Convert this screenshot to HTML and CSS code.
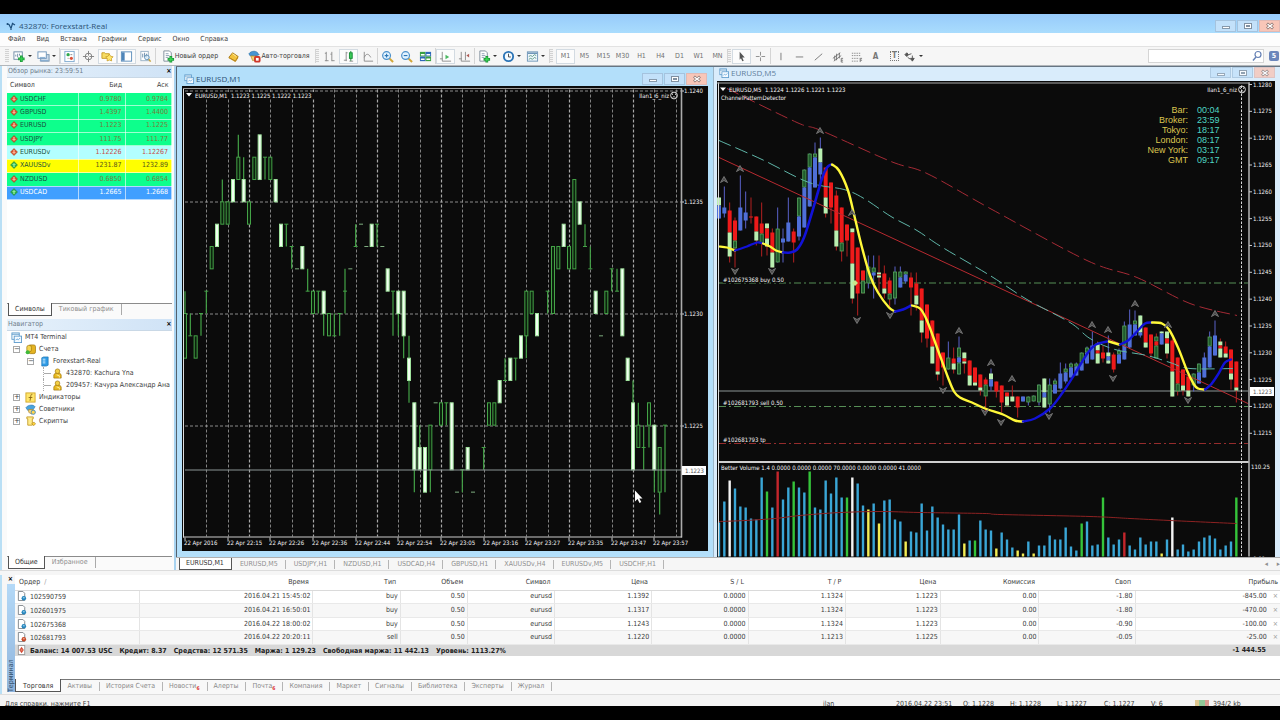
FILE: index.html
```html
<!DOCTYPE html>
<html lang="ru">
<head>
<meta charset="utf-8">
<title>432870: Forexstart-Real</title>
<link rel="stylesheet" href="styles.css">
</head>
<body>
<svg class="defs" aria-hidden="true">
  <symbol id="i-win" viewBox="0 0 12 12"><rect x="1" y="1" width="8" height="7" fill="#fff" stroke="#5f9ccc"/><path d="M1 2.5h8" stroke="#5f9ccc"/><rect x="3.5" y="4.5" width="8" height="7" fill="#f4faff" stroke="#5f9ccc"/><path d="M5 9l1.500-1.500 1.500 1 2-2" fill="none" stroke="#6aa9dc"/></symbol>
  <symbol id="i-newchart" viewBox="0 0 14 14"><rect x="1" y="2" width="9" height="8" fill="#fff" stroke="#6d8aa5"/><path d="M3 7V5M5 8V4M7 6V4" stroke="#6d8aa5"/><path d="M9 6v7M5.500 9.500h7" stroke="#1f9a3c" stroke-width="3"/><path d="M9 7v5M6.500 9.500h5" stroke="#35d34f" stroke-width="1.200"/></symbol>
  <symbol id="i-profiles" viewBox="0 0 14 14"><rect x="4" y="5" width="9" height="7" fill="#c9daea" stroke="#7391ad"/><rect x="1" y="2" width="9" height="7" fill="#fff" stroke="#6f96bb"/><path d="M3 8h6M3 11.500h9" stroke="#7da9d0"/></symbol>
  <symbol id="i-market" viewBox="0 0 14 14"><rect x="2" y="1.500" width="10" height="11" fill="#fff" stroke="#7da9cf"/><circle cx="5.500" cy="5" r="1.800" fill="#2ea84c"/><circle cx="9" cy="9" r="1.700" fill="#dc5238"/><path d="M5 9h1M8 5h2" stroke="#888"/></symbol>
  <symbol id="i-target" viewBox="0 0 14 14"><circle cx="7" cy="7" r="3.600" fill="none" stroke="#808080"/><path d="M7 1v5M7 8v5M1 7h5M8 7h5" stroke="#808080"/></symbol>
  <symbol id="i-folders" viewBox="0 0 14 14"><path d="M1 3h3l1 1h4v5H1z" fill="#f7dd63" stroke="#c79a25"/><path d="M9 4.500l1.400 2.200 2.600.6-1.700 1.900.1 2.600L9 10.800l-2.400 1 .1-2.600L5 7.300l2.600-.6z" fill="#ffe66a" stroke="#c79a25" stroke-width=".8"/></symbol>
  <symbol id="i-panel" viewBox="0 0 14 14"><rect x="1.500" y="2" width="11" height="10" fill="#fff" stroke="#5b8dbb"/><rect x="2" y="2.500" width="3" height="9" fill="#4f86ba"/></symbol>
  <symbol id="i-tester" viewBox="0 0 14 14"><rect x="2" y="1.500" width="8" height="10" fill="#fff" stroke="#9ab2c6"/><path d="M4 4v4M6 3v5M8 4v4" stroke="#6b8daa"/><circle cx="8.500" cy="8" r="2.500" fill="#dbeefa" fill-opacity=".7" stroke="#5f90b8"/><path d="M10.500 10l2 2.500" stroke="#c6a33f" stroke-width="1.600"/></symbol>
  <symbol id="i-order" viewBox="0 0 14 14"><path d="M2 1h6l2 2v9H2z" fill="#fff" stroke="#7e8c99"/><path d="M4 4h3M4 6h4M4 8h3" stroke="#8ca0b2"/><path d="M9.500 6.500v7M6 10h7" stroke="#1c9a38" stroke-width="3"/><path d="M9.500 7.500v5M7 10h5" stroke="#3fdc58" stroke-width="1.200"/></symbol>
  <symbol id="i-editor" viewBox="0 0 14 14"><path d="M2 8l4-5 6 4-3 5z" fill="#f2c23c" stroke="#a87713"/><path d="M2 8l7 4 3-5v2l-3 4-7-4z" fill="#c88f18"/><path d="M6 4l4 3" stroke="#fff0a8"/></symbol>
  <symbol id="i-auto" viewBox="0 0 14 14"><path d="M1 4c3-4 9-3 10 0l1 1-5 2-5-1z" fill="#4595d3" stroke="#2c6fa5" stroke-width=".7"/><path d="M3 6.500h6l-1 4-3 1z" fill="#f4d073" stroke="#b18521" stroke-width=".7"/><rect x="6.500" y="6.500" width="7" height="7" rx="2" fill="#cf3628"/><rect x="8.500" y="8.500" width="3" height="3" fill="#fff"/></symbol>
  <symbol id="i-bars" viewBox="0 0 14 14"><path d="M3.500 2v10M2 11.500h4M2 3.500h1.500M9.500 2v10M8 4.500h1.500M9.500 11.500h3" fill="none" stroke="#8b8b8b"/></symbol>
  <symbol id="i-candle" viewBox="0 0 14 14"><path d="M4.500 2v10M2 11h3M4.500 3H6" fill="none" stroke="#8b8b8b"/><path d="M9.500 1v11" stroke="#168b35"/><rect x="8" y="3" width="3" height="6" fill="#3bcb58" stroke="#168b35"/><path d="M8 12h4" stroke="#8b8b8b"/></symbol>
  <symbol id="i-linec" viewBox="0 0 14 14"><path d="M3.500 2v10H13M3.500 8c2-5 5-4 7 0" fill="none" stroke="#8b8b8b"/></symbol>
  <symbol id="i-zin" viewBox="0 0 14 14"><path d="M9 9l4 4" stroke="#d2a638" stroke-width="2.200"/><circle cx="6" cy="6" r="4.200" fill="#e2f3ff" stroke="#4a8fc9" stroke-width="1.300"/><path d="M4 6h4M6 4v4" stroke="#2d77b7" stroke-width="1.200"/></symbol>
  <symbol id="i-zout" viewBox="0 0 14 14"><path d="M9 9l4 4" stroke="#d2a638" stroke-width="2.200"/><circle cx="6" cy="6" r="4.200" fill="#e2f3ff" stroke="#4a8fc9" stroke-width="1.300"/><path d="M4 6h4" stroke="#2d77b7" stroke-width="1.200"/></symbol>
  <symbol id="i-tile" viewBox="0 0 14 14"><rect x="1" y="2" width="6" height="5" fill="#3aa041"/><rect x="7" y="2" width="6" height="5" fill="#2e68b8"/><rect x="1" y="7" width="6" height="5" fill="#2e68b8"/><rect x="7" y="7" width="6" height="5" fill="#3aa041"/><path d="M2 5h4M8 5h4M2 10h4M8 10h4" stroke="#fff" stroke-width="1.600"/></symbol>
  <symbol id="i-scroll" viewBox="0 0 14 14"><path d="M3.500 2v10H13M1 9.500h3" fill="none" stroke="#8b8b8b"/><path d="M7 5l4 2.500L7 10z" fill="#4cb862"/></symbol>
  <symbol id="i-shift" viewBox="0 0 14 14"><path d="M3.500 2v10H13M1 9.500h3M8 2v9" fill="none" stroke="#8b8b8b"/><path d="M12 4L9 6l3 2z" fill="#b05b54"/></symbol>
  <symbol id="i-clock" viewBox="0 0 14 14"><circle cx="7" cy="7" r="5" fill="#f5fbff" stroke="#2c74b6" stroke-width="2"/><path d="M7 4v3.500h2.500" fill="none" stroke="#444"/></symbol>
  <symbol id="i-tmpl" viewBox="0 0 14 14"><rect x="1.500" y="2" width="11" height="10" fill="#eef6fc" stroke="#6f96b8"/><path d="M2 3.500h10" stroke="#6f96b8" stroke-width="1.600"/><path d="M3 7l2-1 2 1 2-2 2 1M3 10l2-1 2 1 2-2 2 1" fill="none" stroke="#5f9c86"/></symbol>
  <symbol id="i-cursor" viewBox="0 0 14 14"><path d="M5 2l5.500 6-2.700.2 1.600 3.300-1.500.7-1.500-3.400L5 10.500z" fill="#555"/></symbol>
  <symbol id="i-cross" viewBox="0 0 14 14"><path d="M7 2v4M7 8v4M2 7h4M8 7h4" stroke="#8a8a8a"/></symbol>
  <symbol id="i-vl" viewBox="0 0 14 14"><path d="M7.500 3v8" stroke="#777"/></symbol>
  <symbol id="i-hl" viewBox="0 0 14 14"><path d="M3 7.500h8" stroke="#777"/></symbol>
  <symbol id="i-tl" viewBox="0 0 14 14"><path d="M3 11l8-7" stroke="#777"/></symbol>
  <symbol id="i-chan" viewBox="0 0 14 14"><path d="M2 9l8-6M3 12l8-6M4 6v5M6 4v7M9 3v6M11 9v4h2M11 11h2M11 9h2" fill="none" stroke="#6a6a6a" stroke-width=".9"/></symbol>
  <symbol id="i-fibo" viewBox="0 0 14 14"><path d="M2 3.500h10M2 6h10M2 9h8M2 12h7" stroke="#888" stroke-dasharray="1.500 1"/><path d="M11 9v4M11 9h2M11 11h2" stroke="#777"/></symbol>
  <symbol id="i-arrows" viewBox="0 0 14 14"><path d="M1 5l2-2 2 2-2 2zM7 9h4l-2 3z" fill="#555" stroke="#555"/><path d="M5 5l3-1M4 8l3 2M9 6v4" stroke="#555"/></symbol>
  <symbol id="i-lens" viewBox="0 0 12 12"><circle cx="7" cy="4.500" r="3" fill="#fff" stroke="#6581b5" stroke-width="1.200"/><path d="M5 7l-3 3.500" stroke="#6581b5" stroke-width="1.400"/></symbol>
  <symbol id="i-up" viewBox="0 0 8 8"><path d="M4 .5L7.500 4 4 7.500.5 4z" fill="#2ab04c" stroke="#1d7a35" stroke-width=".5"/><path d="M4 2l2 2H2zM3.300 4h1.400v2H3.300z" fill="#8dea9b"/></symbol>
  <symbol id="i-down" viewBox="0 0 8 8"><path d="M4 .5L7.500 4 4 7.500.5 4z" fill="#d8502d" stroke="#9c3a1c" stroke-width=".5"/><path d="M4 6l2-2H2zM3.300 2h1.400v2H3.300z" fill="#f7b195"/></symbol>
  <symbol id="i-person" viewBox="0 0 10 12"><path d="M1 11V8c0-2 2-2.500 4-2.500S9 6 9 8v3z" fill="#e8b91f" stroke="#a57c12" stroke-width=".8"/><circle cx="5" cy="3.500" r="2.500" fill="#f3cf45" stroke="#a57c12" stroke-width=".8"/><path d="M4 7.500l3 1v2" fill="none" stroke="#fff0a0"/></symbol>
  <symbol id="i-people" viewBox="0 0 12 12"><rect x="4" y="1" width="7.500" height="9.500" rx="2" fill="#e4b321" stroke="#a37a10" stroke-width=".8"/><rect x="2" y="1.500" width="5" height="7" rx="2" fill="#f4d653" stroke="#a37a10" stroke-width=".8"/><circle cx="3" cy="9" r="2.300" fill="#3fba3c"/></symbol>
  <symbol id="i-server" viewBox="0 0 10 12"><path d="M2 2l2-1h5v9l-2 1H2z" fill="#2f9be6" stroke="#1a6fae" stroke-width=".7"/><path d="M3 3.500h3M3 5.500h3M3 7.500h3" stroke="#d7efff"/></symbol>
  <symbol id="i-func" viewBox="0 0 12 12"><rect x="1" y="1" width="10" height="10" fill="#ffe56a" stroke="#d3a72a"/><path d="M8 2.500c-2-.5-1.500 2-2.500 7M4 6h4" fill="none" stroke="#8a6512"/></symbol>
  <symbol id="i-expert" viewBox="0 0 12 12"><path d="M1 4c2-3 8-4 10-1l-2 3-6 1z" fill="#4aa3dc" stroke="#3680b4" stroke-width=".7"/><path d="M4 6h5v3l-2 2-3-2z" fill="#f3d37a" stroke="#ae8527" stroke-width=".7"/><circle cx="9" cy="9" r="2.300" fill="#ffd64d" stroke="#438bc0"/></symbol>
  <symbol id="i-script" viewBox="0 0 12 12"><path d="M2 1h7v2H8v7H3V3H2z" fill="#ffec8b" stroke="#c69f2f"/><path d="M9.500 6.500l2 2-2 2-2-2z" fill="#ffd53d" stroke="#a97d12" stroke-width=".7"/></symbol>
  <symbol id="i-buy" viewBox="0 0 10 11"><path d="M1 .5h5l2 2v8H1z" fill="#fff" stroke="#7c8187"/><circle cx="7" cy="8" r="2.500" fill="#2586bd"/><path d="M6 7.500h2" stroke="#bfe4fb"/></symbol>
  <symbol id="i-sell" viewBox="0 0 10 11"><path d="M1 .5h5l2 2v8H1z" fill="#fff" stroke="#7c8187"/><circle cx="7" cy="8" r="2.500" fill="#c84624"/><path d="M6 7.500h2" stroke="#ffd1bd"/></symbol>
  <symbol id="i-bal" viewBox="0 0 10 11"><rect x="1" y=".5" width="7" height="10" fill="#fff" stroke="#999"/><path d="M4.500 2L7 5.500 4.500 9 2 5.500z" fill="#d24a35"/><path d="M3.500 5.500h2" stroke="#f7b195"/></symbol>
  <symbol id="w-min" viewBox="0 0 20 10"><rect x="6.500" y="5.500" width="7" height="2" fill="#fff" stroke="#8799ab"/></symbol>
  <symbol id="w-max" viewBox="0 0 20 10"><rect x="6.500" y="2.500" width="7" height="5" fill="#fff" stroke="#8090a1"/><rect x="8.500" y="4.500" width="3" height="1" fill="none" stroke="#8090a1"/></symbol>
  <symbol id="w-close" viewBox="0 0 20 10"><path d="M7 2.500l6 5M13 2.500l-6 5" stroke="#8a7470" stroke-width="2.800"/><path d="M7.500 3l5 4M12.500 3l-5 4" stroke="#fff" stroke-width="1.400"/></symbol>
</svg>

<div class="app">
  <header class="titlebar">
    <svg class="logo" viewBox="0 0 10 9"><path d="M1 2l2 .5 2 4 1.500-5L9 3M5 6v2" fill="none" stroke="#1d4f7c" stroke-width="1.200"/><circle cx="1.500" cy="2" r="1" fill="#1d4f7c"/></svg>
    <span class="caption">432870: Forexstart-Real</span>
    <div class="winbtns">
      <button aria-label="Свернуть"><svg><use href="#w-min"/></svg></button><button aria-label="Развернуть"><svg><use href="#w-max"/></svg></button><button class="close" aria-label="Закрыть"><svg><use href="#w-close"/></svg></button>
    </div>
  </header>

  <nav class="menu">
    <button>Файл</button><button>Вид</button><button>Вставка</button><button>Графики</button><button>Сервис</button><button>Окно</button><button>Справка</button>
  </nav>

  <div class="toolbar">
    <i class="grip"></i>
    <div class="grp drops"><button aria-label="Новый график"><svg><use href="#i-newchart"/></svg><b></b></button><button aria-label="Профили"><svg><use href="#i-profiles"/></svg><b></b></button></div>
    <div class="grp sep"><button class="on" aria-label="Обзор рынка"><svg><use href="#i-market"/></svg></button><button aria-label="Окно данных"><svg><use href="#i-target"/></svg></button><button class="on" aria-label="Навигатор"><svg><use href="#i-folders"/></svg></button><button class="on" aria-label="Терминал"><svg><use href="#i-panel"/></svg></button><button aria-label="Тестер"><svg><use href="#i-tester"/></svg></button></div>
    <div class="grp sep"><button class="wide order"><svg><use href="#i-order"/></svg>Новый ордер</button><button aria-label="Редактор"><svg><use href="#i-editor"/></svg></button><button class="wide auto"><svg><use href="#i-auto"/></svg>Авто-торговля</button></div>
    <i class="grip sep"></i>
    <div class="grp"><button aria-label="Бары"><svg><use href="#i-bars"/></svg></button><button class="on" aria-label="Свечи"><svg><use href="#i-candle"/></svg></button><button aria-label="Линия"><svg><use href="#i-linec"/></svg></button></div>
    <div class="grp sep"><button aria-label="Увеличить"><svg><use href="#i-zin"/></svg></button><button aria-label="Уменьшить"><svg><use href="#i-zout"/></svg></button><button aria-label="Окна"><svg><use href="#i-tile"/></svg></button></div>
    <div class="grp sep"><button class="on" aria-label="Автопрокрутка"><svg><use href="#i-scroll"/></svg></button><button aria-label="Сдвиг"><svg><use href="#i-shift"/></svg></button></div>
    <div class="grp drops sep"><button aria-label="Индикаторы"><svg><use href="#i-order"/></svg><b></b></button><button aria-label="Периоды"><svg><use href="#i-clock"/></svg><b></b></button><button aria-label="Шаблоны"><svg><use href="#i-tmpl"/></svg><b></b></button></div>
    <i class="grip sep wider"></i>
    <div class="grp tf"><button class="on">M1</button><button>M5</button><button>M15</button><button>M30</button><button>H1</button><button>H4</button><button>D1</button><button>W1</button><button>MN</button></div>
    <i class="grip sep"></i>
    <div class="grp"><button class="on" aria-label="Курсор"><svg><use href="#i-cursor"/></svg></button><button aria-label="Перекрестие"><svg><use href="#i-cross"/></svg></button></div>
    <div class="grp sep"><button aria-label="Вертикальная"><svg><use href="#i-vl"/></svg></button><button aria-label="Горизонтальная"><svg><use href="#i-hl"/></svg></button><button aria-label="Трендовая"><svg><use href="#i-tl"/></svg></button><button aria-label="Канал"><svg><use href="#i-chan"/></svg></button><button aria-label="Фибоначчи"><svg><use href="#i-fibo"/></svg></button><button class="letter">A</button><button class="letter"><span class="tbox">T</span></button><button aria-label="Стрелки"><svg><use href="#i-arrows"/></svg><b></b></button></div>
    <label class="search"><input type="text" aria-label="Поиск"><svg><use href="#i-lens"/></svg></label>
    <button class="bubble">5</button>
  </div>

  <main class="middle">
    <aside class="side">
      <div class="phead"><span>Обзор рынка: 23:59:51</span><button aria-label="Закрыть">×</button></div>
      <div class="market">
        <table class="quotes">
          <thead><tr><th>Символ</th><th>Бид</th><th>Аск</th></tr></thead>
          <tbody>
            <tr class="g"><td><svg><use href="#i-down"/></svg>USDCHF</td><td>0.9780</td><td>0.9784</td></tr>
            <tr class="g"><td><svg><use href="#i-down"/></svg>GBPUSD</td><td>1.4397</td><td>1.4400</td></tr>
            <tr class="g"><td><svg><use href="#i-down"/></svg>EURUSD</td><td>1.1223</td><td>1.1225</td></tr>
            <tr class="g"><td><svg><use href="#i-down"/></svg>USDJPY</td><td>111.75</td><td>111.77</td></tr>
            <tr class="c"><td><svg><use href="#i-down"/></svg>EURUSDv</td><td>1.12226</td><td>1.12267</td></tr>
            <tr class="y"><td><svg><use href="#i-up"/></svg>XAUUSDv</td><td>1231.87</td><td>1232.89</td></tr>
            <tr class="g"><td><svg><use href="#i-down"/></svg>NZDUSD</td><td>0.6850</td><td>0.6854</td></tr>
            <tr class="s"><td><svg><use href="#i-up"/></svg>USDCAD</td><td>1.2665</td><td>1.2668</td></tr>
          </tbody>
        </table>
      </div>
      <div class="tabs"><button class="on">Символы</button><button>Тиковый график</button></div>
      <div class="phead nav"><span>Навигатор</span><button aria-label="Закрыть">×</button></div>
      <ul class="tree">
        <li><svg><use href="#i-win"/></svg>MT4 Terminal</li>
        <li class="l1"><i class="box">−</i><svg><use href="#i-people"/></svg>Счета</li>
        <li class="l2"><i class="box">−</i><svg><use href="#i-server"/></svg>Forexstart-Real</li>
        <li class="l3"><i class="stub"></i><svg><use href="#i-person"/></svg>432870: Kachura Yna</li>
        <li class="l3"><i class="stub"></i><svg><use href="#i-person"/></svg>209457: Качура Александр Ана</li>
        <li class="l1"><i class="box">+</i><svg><use href="#i-func"/></svg>Индикаторы</li>
        <li class="l1"><i class="box">+</i><svg><use href="#i-expert"/></svg>Советники</li>
        <li class="l1"><i class="box">+</i><svg><use href="#i-script"/></svg>Скрипты</li>
      </ul>
      <div class="tabs bottom"><button class="on">Общие</button><button>Избранное</button></div>
    </aside>

    <section class="work">
      <div class="mdi">
        <article class="win active">
          <header><svg class="wi"><use href="#i-win"/></svg><span class="caption">EURUSD,M1</span>
            <div class="winbtns"><button aria-label="Свернуть"><svg><use href="#w-min"/></svg></button><button aria-label="Развернуть"><svg><use href="#w-max"/></svg></button><button class="close" aria-label="Закрыть"><svg><use href="#w-close"/></svg></button></div>
          </header>
          <svg class="chart" id="m1" viewBox="182 86 526 464"></svg>
        </article>
        <article class="win idle">
          <header><svg class="wi"><use href="#i-win"/></svg><span class="caption">EURUSD,M5</span>
            <div class="winbtns"><button aria-label="Свернуть"><svg><use href="#w-min"/></svg></button><button aria-label="Развернуть"><svg><use href="#w-max"/></svg></button><button class="close" aria-label="Закрыть"><svg><use href="#w-close"/></svg></button></div>
          </header>
          <svg class="chart" id="m5" viewBox="717 81 558 475"></svg>
        </article>
      </div>
      <div class="ctabs"><button class="on">EURUSD,M1</button><button>EURUSD,M5</button><button>USDJPY,H1</button><button>NZDUSD,H1</button><button>USDCAD,H4</button><button>GBPUSD,H1</button><button>XAUUSDv,H4</button><button>EURUSDv,M5</button><button>USDCHF,H1</button><span class="arrows"><span>◂</span><span>▸</span></span></div>
    </section>
  </main>

  <section class="terminal">
    <div class="strip"><button aria-label="Закрыть">×</button><span>Терминал</span></div>
    <div class="tbody">
      <table class="orders">
        <colgroup><col class="c1"><col class="c2"><col class="c3"><col class="c4"><col class="c5"><col class="c6"><col class="c7"><col class="c8"><col class="c9"><col class="c10"><col class="c11"><col class="c12"></colgroup>
        <thead><tr><th>Ордер &nbsp;<em>∕</em></th><th>Время</th><th>Тип</th><th>Объем</th><th>Символ</th><th>Цена</th><th>S / L</th><th>T / P</th><th>Цена</th><th>Комиссия</th><th>Своп</th><th class="last">Прибыль</th></tr></thead>
        <tbody>
          <tr><td><svg><use href="#i-buy"/></svg>102590759</td><td>2016.04.21 15:45:02</td><td>buy</td><td>0.50</td><td>eurusd</td><td>1.1392</td><td>0.0000</td><td>1.1324</td><td>1.1223</td><td>0.00</td><td>-1.80</td><td>-845.00<i>×</i></td></tr>
          <tr><td><svg><use href="#i-buy"/></svg>102601975</td><td>2016.04.21 16:50:01</td><td>buy</td><td>0.50</td><td>eurusd</td><td>1.1317</td><td>0.0000</td><td>1.1324</td><td>1.1223</td><td>0.00</td><td>-1.80</td><td>-470.00<i>×</i></td></tr>
          <tr><td><svg><use href="#i-buy"/></svg>102675368</td><td>2016.04.22 18:00:02</td><td>buy</td><td>0.50</td><td>eurusd</td><td>1.1243</td><td>0.0000</td><td>1.1324</td><td>1.1223</td><td>0.00</td><td>-0.90</td><td>-100.00<i>×</i></td></tr>
          <tr><td><svg><use href="#i-sell"/></svg>102681793</td><td>2016.04.22 20:20:11</td><td>sell</td><td>0.50</td><td>eurusd</td><td>1.1220</td><td>0.0000</td><td>1.1213</td><td>1.1225</td><td>0.00</td><td>-0.05</td><td>-25.00<i>×</i></td></tr>
        </tbody>
        <tfoot><tr><td colspan="11"><svg><use href="#i-bal"/></svg><span>Баланс: 14 007.53 USC</span><span>Кредит: 8.37</span><span>Средства: 12 571.35</span><span>Маржа: 1 129.23</span><span>Свободная маржа: 11 442.13</span><span>Уровень: 1113.27%</span></td><td>-1 444.55</td></tr></tfoot>
      </table>
      <div class="ttabs"><button class="on">Торговля</button><button>Активы</button><button>История Счета</button><button>Новости<sub>6</sub></button><button>Алерты</button><button>Почта<sub>6</sub></button><button>Компания</button><button>Маркет</button><button>Сигналы</button><button>Библиотека</button><button>Эксперты</button><button>Журнал</button></div>
    </div>
  </section>

  <footer class="status">
    <span class="help">Для справки, нажмите F1</span><span class="profile">ilan</span><span class="time">2016.04.22 23:51</span><span>O: 1.1228</span><span>H: 1.1228</span><span>L: 1.1227</span><span>C: 1.1227</span><span>V: 6</span>
    <span class="net"><svg viewBox="0 0 15 8"><path d="M1 0v8M3 0v8" stroke="#c99a2a"/><path d="M5 0v8M7 0v8M9 0v8" stroke="#2f9a3a"/><path d="M11 0v8M13 0v8" stroke="#c2402d"/></svg>394/2 kb</span>
  </footer>
</div>
<script src="charts.js"></script>
</body>
</html>
```
FILE: styles.css
```css
* { box-sizing: border-box; }
body {
  margin: 0; height: 100vh; padding: 14px 0; background: #000; overflow: hidden;
  font: 7px/9px "DejaVu Sans Condensed", "DejaVu Sans", sans-serif; color: #3c3c3c;
}
button { font: inherit; color: inherit; background: none; border: 0; padding: 0; margin: 0; white-space: nowrap; }
.defs { position: absolute; width: 0; height: 0; }
.app { height: 100%; display: flex; flex-direction: column; overflow: hidden; background: #f6f6f6; }

.caption { font: 8px/10px "Open Sans", "Noto Sans", sans-serif; color: #2c5276; }
.titlebar { flex: none; height: 19px; display: flex; align-items: center; gap: 3px; padding: 5px 0 0 6px; background: linear-gradient(#97cbfb, #a9dcfd); }
.logo { width: 10px; height: 9px; }
.winbtns { margin-left: auto; display: flex; gap: 1px; }
.winbtns button { width: 21px; height: 12px; border: 1px solid #a5c3de; background: #c3e1fa; display: flex; align-items: center; justify-content: center; }
.winbtns svg { width: 20px; height: 10px; flex: none; }
.winbtns .close { background: #f8c6b8; border-color: #e0b9b4; }

.menu { flex: none; height: 14px; padding-left: 8px; display: flex; align-items: center; gap: 11px; background: #fdfdfd; border-bottom: 1px solid #e2e2e2; }

.toolbar { flex: none; height: 19px; display: flex; align-items: center; padding-left: 5px; background: #f6f6f6; border-bottom: 1px solid #b2b6ba; }
.grip { width: 4px; height: 14px; margin-right: 1px; background: repeating-linear-gradient(#d2d2d2 0 1px, #f4f4f4 1px 2px); }
.wider { margin: 0 3px 0 2px; }
.grp { display: flex; height: 16px; align-items: center; }
.sep { border-left: 1px solid #d4d4d4; }
.toolbar button { width: 19px; height: 15px; display: flex; align-items: center; justify-content: center; flex: none; }
.grp svg { width: 13px; height: 13px; flex: none; }
.grp .on { background: #fcfcfc; border: 1px solid #d3dbe2; }
.drops button { width: 24px; }
.drops { min-width: 49px; }
.grp b { border: 2px solid transparent; border-top-color: #333; border-bottom: 0; margin-left: 2px; }
.toolbar .order { width: 68px; }
.toolbar .auto { width: 72px; }
.toolbar .tf button { width: 19px; color: #707070; }
.toolbar .letter { font-size: 8px; color: #777; font-weight: bold; }
.tbox { border: 1px dotted #777; width: 9px; height: 10px; line-height: 8px; text-align: center; }
.search { margin-left: auto; width: 116px; height: 14px; display: flex; align-items: center; background: #fff; border: 1px solid #d5d5d5; }
.search input { flex: 1; min-width: 0; height: 10px; border: 0; padding: 0; background: none; font: inherit; outline: 0; }
.search svg { width: 12px; height: 12px; }
.toolbar .bubble { width: 10px; height: 10px; margin: 0 1px 0 5px; background: #6c86bb; color: #fff; border-radius: 2px; font-weight: bold; }

.middle { flex: 1; min-height: 0; display: flex; }
.side { flex: none; width: 176px; padding: 0 2px 0 5px; display: flex; flex-direction: column; border-left: 2px solid #b9dff5; background: #fafafa; border-right: 2px solid #a9d3f0; }
.phead { flex: none; height: 12px; display: flex; justify-content: space-between; align-items: center; padding: 0 0 0 1px; background: linear-gradient(90deg, #e6f1fb, #d0e3f6); color: #6e7d8c; border-bottom: 1px solid #c9d8e6; }
.phead button { width: 6px; color: #000; font-weight: bold; }
.market { height: 225px; background: #fff; flex: none; }
.quotes { width: 100%; height: 122px; border-collapse: collapse; table-layout: fixed; }
.quotes th { font-weight: normal; height: 15px; padding: 0 3px; text-align: right; }
.quotes th:first-child { text-align: left; width: 71px; }
.quotes th:nth-child(2) { width: 47px; }
.quotes td { padding: 0 3px 0 0; text-align: right; border-bottom: 1px solid #ffffff99; border-right: 1px solid #ffffff99; }
.quotes td:first-child { text-align: left; padding-left: 3px; color: #1a4f3d; }
.quotes td svg { width: 8px; height: 8px; margin-right: 2px; vertical-align: -2px; }
.g { background: #0dff8c; color: #7a7a3a; }
.c { background: #b3ffff; color: #c44a4a; }
.y { background: #ffff00; color: #55551a; }
.s { background: #409fff; color: #fff; }
.quotes .s td:first-child { color: #fff; }
.tabs { flex: none; height: 12px; display: flex; align-items: flex-start; border-top: 1px solid #8b8b8b; padding-left: 1px; color: #8e8e8e; }
.tabs button { height: 11px; padding: 0 7px; border-right: 1px solid #aaa; }
.tabs .on { color: #333; background: #fff; border: 1px solid #555; border-top: 0; margin-top: -1px; height: 13px; padding: 0 6px; }
.bottom { height: 14px; }
.nav { margin-top: 4px; }
.tree { flex: 1; min-height: 0; margin: 0; padding: 0 0 0 4px; list-style: none; background: #fff; overflow: hidden; }
.tree li { height: 12px; display: flex; align-items: center; white-space: nowrap; }
.tree svg { width: 11px; height: 11px; margin-right: 3px; flex: none; }
.tree .l1 { padding-left: 2px; }
.tree .l2 { padding-left: 16px; }
.tree .l3 { padding-left: 32px; }
.box { flex: none; width: 7px; height: 7px; border: 1px solid #a8a8a8; font: 7px/5px "DejaVu Sans", sans-serif; text-align: center; margin-right: 5px; }
.stub { flex: none; width: 8px; height: 12px; border-left: 1px dotted #aaa; background: linear-gradient(#aaa, #aaa) 0 6px / 8px 1px no-repeat; margin-right: 1px; }

.work { flex: 1; min-width: 0; display: flex; flex-direction: column; }
.mdi { flex: 1; min-height: 0; display: grid; grid-template-columns: 537fr 567fr; border-top: 1px solid #667583; background: #a5d2f2; }
.win { min-width: 0; min-height: 0; display: flex; flex-direction: column; overflow: hidden; border-left: 1px solid #53616d; }
.win header { flex: none; display: flex; align-items: center; gap: 2px; }
.wi { width: 10px; height: 10px; flex: none; }
.active { background: #b3dffa; padding: 0 5px 6px; }
.active header { height: 19px; padding: 4px 1px 0 2px; }
.idle { background: #d9ecfb; padding: 0 5px 0 3px; border-left-color: #9db6c8; }
.idle header { height: 14px; padding: 0 0 3px 2px; }
.idle .caption { color: #5f7f9c; }
.idle .winbtns button { opacity: .8; height: 11px; }
.chart { flex: 1; min-height: 0; width: 100%; display: block; background: #0b0b0b; font: 6px "DejaVu Sans Condensed", "DejaVu Sans", sans-serif; fill: #f4f4f4; }
.clock { font: 9px "Liberation Sans", Arial, sans-serif; }
.ctabs { flex: none; height: 13px; display: flex; align-items: center; padding-left: 3px; border-top: 1px solid #b0b0b0; color: #909090; }
.ctabs button { height: 9px; padding: 0 7px 0 8px; border-right: 1px solid #b5b5b5; line-height: 9px; }
.ctabs .on { height: 12px; padding: 0 7px 0 6px; background: #fff; color: #333; border: 1px solid #555; border-top: 0; }
.arrows { margin-left: auto; display: flex; gap: 9px; }

.terminal { flex: none; height: 124px; display: flex; padding-top: 4px; border-top: 1px solid #dcdcdc; }
.strip { flex: none; width: 15px; display: flex; flex-direction: column; align-items: center; padding-left: 4px; border-left: 2px solid #b9dff5; }
.strip button { height: 9px; color: #000; font-weight: bold; }
.strip span { flex: 1; width: 8px; margin-bottom: 2px; writing-mode: vertical-rl; transform: rotate(180deg); line-height: 8px; background: linear-gradient(#8fb4dc, #b4d9f7); color: #34506d; }
.tbody { flex: 1; min-width: 0; display: flex; flex-direction: column; background: #fff; }
.orders { width: 100%; height: 81px; border-collapse: collapse; table-layout: fixed; white-space: nowrap; }
.c1 { width: 9.850%; } .c2 { width: 13.700%; } .c3 { width: 6.900%; } .c4 { width: 5.300%; } .c5 { width: 6.900%; } .c6 { width: 7.700%; }
.c7 { width: 7.600%; } .c8 { width: 7.700%; } .c9 { width: 7.500%; } .c10 { width: 7.800%; } .c11 { width: 7.600%; }
.orders th, .orders td { padding: 0 2px; text-align: right; border-right: 1px solid #e4e4e4; }
.orders th { font-weight: normal; height: 15px; padding-right: 4px; border-right: 0; border-bottom: 1px solid #dadada; }
.orders th.last { padding-right: 2px; }
.orders th:first-child, .orders td:first-child { text-align: left; padding-left: 4px; }
.orders em { font-style: normal; color: #999; }
.orders td:first-child { padding-left: 2px; }
.orders tbody td { border-bottom: 1px solid #e9e9e9; }
.orders tbody td:last-child { border-right: 0; }
.orders tbody tr:nth-child(even) { background: #f7f7f7; }
.orders i { font-style: normal; color: #999; margin-left: 6px; }
.orders td svg { width: 10px; height: 10px; margin-right: 3px; vertical-align: -2px; }
.orders tfoot td { background: #d8d8d8; font-weight: bold; color: #222; border: 0; }
.orders tfoot span { margin-right: 7px; }
.orders tfoot td:last-child { padding-right: 14px; }
.ttabs { margin-top: auto; flex: none; height: 15px; display: flex; align-items: flex-start; border-top: 1px solid #777; color: #8a8a8a; background: #f8f8f8; }
.ttabs button { height: 9px; margin-top: 2px; padding: 0 7px 0 6px; border-right: 1px solid #b5b5b5; line-height: 9px; }
.ttabs .on { height: 13px; margin-top: -1px; padding: 2px 7px 0; background: #fff; color: #333; border: 1px solid #555; border-top: 0; }
.ttabs sub { font-size: 5px; line-height: 1px; color: #d33; font-weight: bold; }

.status { flex: none; height: 12px; overflow: hidden; padding: 5px 38px 0 5px; display: flex; border-top: 1px solid #dedede; background: #f4f4f4; white-space: nowrap; }
.status span { flex: none; width: 47px; }
.status .help { flex: 1; }
.status .profile { width: 73px; }
.status .time { width: 67px; }
.status .net { width: 47px; display: flex; gap: 3px; margin-left: -3px; }
.status svg { width: 15px; height: 8px; flex: none; }
```
FILE: charts.js
```js
const NS = 'http://www.w3.org/2000/svg';
const STEP = 16 / 3;

function add(svg, tag, attrs, text) {
  const el = document.createElementNS(NS, tag);
  for (const k in attrs) el.setAttribute(k, attrs[k]);
  if (text !== undefined) el.textContent = text;
  svg.appendChild(el);
  return el;
}
function line(svg, x1, y1, x2, y2, stroke, extra) {
  return add(svg, 'path', Object.assign({ d: `M${x1} ${y1}L${x2} ${y2}`, stroke, fill: 'none' }, extra));
}
function rect(svg, x, y, w, h, fill, extra) {
  return add(svg, 'rect', Object.assign({ x, y, width: w, height: h, fill, 'shape-rendering': 'crispEdges' }, extra));
}
function label(svg, x, y, text, extra) {
  return add(svg, 'text', Object.assign({ x, y }, extra), text);
}
function face(svg, x, y) {
  add(svg, 'circle', { cx: x, cy: y, r: 3.4, fill: 'none', stroke: '#ddd' });
  add(svg, 'path', { d: `M${x - 1.5} ${y - 2}v1.500M${x + 1.5} ${y - 2}v1.500M${x - 1.5} ${y + 2}q1.500-2 3 0`, stroke: '#ddd', fill: 'none', 'stroke-width': .8 });
}

/* EURUSD,M1: pips are counted from 1.1230 */
(function () {
  const s = document.getElementById('m1');
  const X = i => 185 + i * STEP;
  const Y = p => 313 - p * 22.33;
  for (let k = 1; k <= 23; k++) {
    const x = Math.round(185 + k * STEP * 4) + .5;
    line(s, x, 89, x, 536, k % 3 ? '#a0a0a0' : '#a8a8a8', { 'stroke-dasharray': '3 2', 'stroke-width': k % 3 ? .8 : 1.2 });
  }
  [10, 5, 0, -5].forEach(p => {
    const y = Math.round(Y(p)) + .5;
    line(s, 185, y, 681, y, '#999', { 'stroke-dasharray': '3 2', 'stroke-width': .9 });
    line(s, 681, y, 684, y, '#ddd');
    label(s, 684, y + 2, (1.123 + p / 10000).toFixed(4));
  });
  /* index, kind, top, bottom, high, low; kind: h hollow, w filled, l line, d dash */
  const data = `0h0,-2,1 1l0,-1,-1 2h-1,-2 3l0,-1,0 4l1,0,1 5h3,2 6w4,3 7h5,4,6 8h5,4 9w6,5 10h7,6,8 11w6,5,7 12h5,4
13h7,6 14w8,6 15l7,6,7 16h7,6 17w6,5 18w4,3 19l4,3,4 20l3,2,3 21d2 22w3,2 23l2,1,1 24h1,0 25l1,0,1 26w1,0,1,-1 27h0,-1
28l0,-1,-1 29l0,-1,0 30l2,0,1 31d2 32l4,3,3 33d4 34d3 35w4,3 36l4,3,4 37d3 38w2,1 39l1,-1,1 40w1,0,1,-1 41w1,-1,1,-2
42w-2,-3,-1,-4 43w-4,-7,-4,-8 44w-6,-7,-5 45w-6,-8 46h-5,-7,-5,-8 47d-4 48h-4,-5 49l-4,-5,-4 50w-4,-7 51d-8 52l-7,-8,-7
53w-6,-7 54d-8 56l-6,-7,-6 57h-4,-5 58h-4,-5 59w-3,-4 60l-2,-3,-3 61w-2,-3 62l-2,-3,-2 63w-1,-2 64h1,-1,1,-2 65h1,0
66w0,-1 68l1,0,1 69h3,0 70h3,2 71w4,3 72h3,2 73h6,2 74w5,4 75l4,3,3 76l3,2,2 77w1,0 78d-1 79h1,0 80l2,1,2 81l2,1,1
82w2,-1 83w-2,-3 84w-4,-7,-3 85h-5,-6,-4 86l-5,-7,-6 87h-4,-5,-4,-6 88w-5,-7,-5,-8 89h-6,-8,-6,-9 90l-5,-8,-5`;
  const G = '#44a347';
  data.split(/\s+/).forEach(t => {
    const m = t.match(/^(\d+)([hwld])(.+)$/);
    const x = X(+m[1]), k = m[2], v = m[3].split(',').map(Number);
    if (k === 'd') { line(s, x - 2, Y(v[0]), x + 2, Y(v[0]), '#7fae80'); return; }
    const top = Y(v[0]), bot = Y(v[1]);
    if (k === 'l') {
      line(s, x, top, x, bot, G, { 'stroke-width': 1.2 });
      line(s, x - 2, Y(v[2]), x + 2, Y(v[2]), G);
      return;
    }
    if (v[2] !== undefined) line(s, x, Y(v[2]), x, top, G, { 'stroke-width': 1.2 });
    if (v[3] !== undefined) line(s, x, bot, x, Y(v[3]), G, { 'stroke-width': 1.2 });
    add(s, 'rect', { x: x - 1.5, y: top, width: 3, height: bot - top, fill: k === 'w' ? '#f1fff0' : '#0b200c', stroke: k === 'w' ? '#9fe39d' : G });
  });
  line(s, 185, 469.5, 681, 469.5, '#8c9696');
  line(s, 183.5, 88, 183.5, 537, '#ddd');
  line(s, 183, 88, 682, 88, '#9a9a9a');
  line(s, 681.5, 88, 681.5, 537, '#ababab', { 'stroke-width': 1.6 });
  line(s, 183, 536.5, 682, 536.5, '#ccc');
  rect(s, 682, 465, 24, 9, '#fff');
  label(s, 685, 472, '1.1223', { fill: '#555' });
  ['2016', '22:15', '22:26', '22:36', '22:44', '22:54', '23:05', '23:16', '23:27', '23:35', '23:47', '23:57'].forEach((t, i) => {
    const x = Math.round(185 + i * 42.667);
    line(s, x, 537, x, 540, '#ccc');
    label(s, x - 1, 544, '22 Apr ' + t);
  });
  rect(s, 186, 91, 132, 7, '#0b0b0b');
  add(s, 'path', { d: 'M186 92.500h6l-3 3.500z', fill: '#fff' });
  label(s, 195, 97, 'EURUSD,M1\u00a0\u00a01.1223 1.1225 1.1222 1.1223');
  label(s, 669, 97, 'Ilan1_6_niz', { 'text-anchor': 'end' });
  face(s, 674, 95);
  add(s, 'path', { d: 'M635 490v11l2.500-2.500 2 4 1.800-1-2-3.500h3.200z', fill: '#fff' });
})();

/* EURUSD,M5: price pane and volume pane */
(function () {
  const s = document.getElementById('m5');
  const X = i => 719 + i * STEP;
  const dash = (y, c) => line(s, 719, y, 1248, y, c, { 'stroke-dasharray': '7 3 2 3', 'stroke-width': .9 });
  dash(282.5, '#5f9e5f'); dash(406, '#5f9e5f'); dash(443, '#a53030');
  line(s, 719, 390.5, 1248, 390.5, '#8c9696');

  /* per bar: high, low, then coloured parts "colour top bottom" */
  const bars = `197 218 p197 205 b205 218|186 217 b207 213|202 262 r210 232 p232 256|217 267 r220 240 g240 248|175 230 b207 230
191 228 b212 220|197 223 r216 217|216 245 r216 231 p231 240|202 256 r223 233 g233 243|223 255 p223 228 r228 238 p238 246
228 267 r232 252 p252 267|207 262 g228 262|228 262 b238 242|197 241 b222 241|228 262 r231 242
197 240 g197 216 b216 236|169 227 g169 187 b187 227|153 206 g153 167 b167 206|142 187 g153 157 b157 187|137 185 p148 162 b162 174
167 217 r167 197 p197 213|182 223 r182 207|190 250 r195 230 p230 246|207 261 r207 242 g242 251|224 256 r224 240
228 303 p228 232 r232 263 p263 298|247 315 r247 293|270 293 r270 280 g280 293|255 288 g266 283|255 298 g267 272 b272 275
255 292 p272 274 r274 275 p275 277|265 298 r273 288 p288 293|277 307 r280 293 g293 299|266 304 g271 298|266 287 g271 277 b277 287
271 283 g271 274 b274 281|272 315 r277 287|272 310 r283 295 p295 304|288 342 r288 320 p320 332|304 347 r304 338
320 363 r320 346 p346 363|333 380 r333 371 p371 374|352 385 r352 367|341 369 g357 369|347 373 r358 363 p363 369
336 374 g347 357 b357 362 g362 374|352 373 p352 358 r358 361 p361 363|360 385 r360 375 p375 385|367 385 r367 382 p382 385|374 395 r374 387 p387 390
377 411 r379 384 g384 396|368 390 p373 379 b379 386|381 397 r381 391|385 412 r385 402|392 406 r392 396 p396 405
385 401 p396 401|396 417 r396 407|396 401 b396 401|396 405 g396 402|395 401 g395 401
384 405 g384 402|378 407 p378 392 b392 397 p397 407|378 412 g384 404|378 393 g380 384 b384 393|362 389 b373 388
363 383 g368 372 b372 381|362 377 g363 367 b367 377|362 375 g363 366 b366 375|352 370 g352 362 b362 370|346 363 g347 352 b352 363
331 359 b345 359|341 363 p343 350 r350 353 p353 363|345 362 r352 358|335 363 p352 356 b356 360 p360 363|352 372 r354 369
348 363 g350 354 b354 363|321 359 g325 345 b345 359|309 348 b324 347|310 335 g320 324 b324 335|315 337 p315 332 b332 335
327 347 r327 342 p342 347|334 357 r334 353|333 358 g336 341 r341 345 g345 358|331 344 p331 333 b333 344|331 358 p331 338 r338 343 p343 353
338 396 r340 371 p371 396|357 395 r357 383 g383 391|369 395 r369 385 p385 390|376 396 r376 390 p390 396|373 391 g373 385
363 383 g363 372 b372 383|352 377 b357 377|331 367 g336 346 b346 367|320 355 b335 355|338 357 p341 345 r345 348 p348 357
341 357 r346 353 p353 357|349 389 r349 373 p373 379|361 402 r361 387 p387 390`.split(/[|\n]/);
  const C = { r: '#ee1a1a', b: '#4f6fd8', g: '#1f5a2c', p: '#b9efb0' };
  bars.forEach((b, i) => {
    const t = b.split(' '), x = X(i), wick = /b/.test(b) || (/g/.test(b) && !/r/.test(b)) ? '#5a62c8' : '#b32020';
    line(s, x, t[0], x, t[1], wick, { 'stroke-width': 1 });
    for (let k = 2; k < t.length; k += 2) {
      const c = t[k][0], y = +t[k].slice(1), h = Math.max(1, t[k + 1] - y);
      if (c === 'g') add(s, 'rect', { x: x - 1.6, y: y + .5, width: 3.2, height: Math.max(1, h - 1), fill: C.g, stroke: '#57a35c', 'stroke-width': .8 });
      else add(s, 'rect', { x: x - 2, y, width: 4, height: h, fill: C[c] });
    }
  });

  const curve = (pts, c, w, extra) => {
    const p = pts.split(' ').map(q => q.split(',').map(Number));
    let d = `M${p[0]}`;
    for (let i = 0; i < p.length - 1; i++) {
      const a = p[i - 1] || p[i], b = p[i], e = p[i + 1], f = p[i + 2] || e;
      d += `C${b[0] + (e[0] - a[0]) / 6} ${b[1] + (e[1] - a[1]) / 6} ${e[0] - (f[0] - b[0]) / 6} ${e[1] - (f[1] - b[1]) / 6} ${e[0]} ${e[1]}`;
    }
    add(s, 'path', Object.assign({ d, fill: 'none', stroke: c, 'stroke-width': w, 'stroke-linecap': 'round' }, extra));
  };
  line(s, 719, 157, 1248, 403, '#b82a30');
  curve('727,88 797,122 821,130 891,161 927,173 992,209 1087,260 1137,277 1190,303 1237,315', '#a52a35', 1, { 'stroke-dasharray': '13 5', 'stroke-linecap': 'butt' });
  curve('719,140 762,159 809,182 844,189 864,198 891,216 917,230 941,246 990,275 1027,299 1070,322 1090,338 1115,349 1147,355 1170,362 1190,368 1235,368', '#5fb5a8', 1, { 'stroke-dasharray': '13 5', 'stroke-linecap': 'butt' });
  const Yl = '#fff83a', Bl = '#1212d8';
  curve('719,246 727,247 735,250', Yl, 2.2);
  curve('735,250 747,246 757,242 763,243', Bl, 2.2);
  curve('763,243 770,246 776,250 783,252', Yl, 2.2);
  curve('783,252 790,252 797,249 804,237 812,212 822,178 827,167 831,164', Bl, 2.6);
  curve('832,164 839,170 848,190 855,218 862,247 870,275 878,292 889,307 895,311', Yl, 2.4);
  curve('895,311 903,309 911,305', Bl, 2.6);
  curve('912,305 920,308 927,320 937,347 948,377 954,391 960,397 972,402 985,408 1003,414 1015,420 1023,421', Yl, 2.4);
  curve('1023,421 1035,418 1050,408 1062,393 1075,373 1088,352 1096,344 1107,341', Bl, 2.4);
  curve('1109,341 1119,344', Yl, 2.4);
  curve('1120,344 1128,340 1137,331 1145,323 1152,322', Bl, 2.4);
  curve('1152,322 1162,323 1169,329 1178,347 1187,370 1194,384 1198,388 1204,389', Yl, 2.4);
  curve('1205,389 1211,384 1218,374 1225,362 1231,359', Bl, 2.4);
  const mark = (x, y, d) => add(s, 'path', { d: `M${x} ${y - 3 * d}l${3.5} ${6 * d}l-3.5 ${-2 * d}l-3.500 ${2 * d}z`, fill: '#4a4a4a', stroke: '#858585', 'stroke-width': .8 });
  [[724, 179], [740, 168], [820, 130], [852, 212], [959, 330], [991, 362], [1012, 378], [1092, 324], [1108, 329], [1135, 303], [1168, 324], [1215, 313]].forEach(p => mark(p[0], p[1], 1));
  [[735, 271], [772, 271], [857, 320], [890, 315], [943, 390], [985, 412], [1001, 422], [1049, 416], [1113, 378], [1188, 400]].forEach(p => mark(p[0], p[1], -1));
  add(s, 'path', { d: 'M855 279.500l3 3-3 3-3-3z', fill: '#c8e88c' });

  rect(s, 719, 460, 530, 2, '#cfcfcf');
  const vol = `522 501 480w 488 506 507 518 519 477 491g 507 471r 499 487 481g 487 492 471g 507 509 480 493 477 497 497g 477w 483 505 509y 503
523y 500 499 519 521 541y 531 532 503 530 506 517 524 529 529 514 543y 540 540g 520 529 530 548y 532 539 547 550y 553y 541 553y
545 545 535 539 539 527 546 550 523g 521 545 544 497g 537 544 539 532r 545 549 537 544 541 541 553y 539 517w 549 544 551 549
541 537 535 538 549 545 541 497g`.split(/\s+/);
  const V = { w: '#f4f4f4', g: '#35c43a', r: '#c4262c', y: '#f4ee55' };
  vol.forEach((v, i) => {
    const y = parseInt(v, 10);
    add(s, 'rect', { x: X(i) - 1.2, y, width: 2.4, height: 556 - y, fill: V[v.slice(3)] || '#3aa6d6' });
  });
  curve('719,521 745,520 775,518 800,515 840,512 880,511 920,512 985,513 1000,514 1090,516 1130,518 1170,520 1236,523', '#8d2222', 1);

  line(s, 1241.5, 85, 1241.5, 556, '#d8d8d8', { 'stroke-dasharray': '2.500 1.500' });
  line(s, 718.5, 82, 718.5, 556, '#ddd');
  line(s, 717, 82.5, 1250, 82.5, '#aaa');
  line(s, 1249, 82, 1249, 556, '#ababab', { 'stroke-width': 1.600 });
  for (let i = 0; i < 14; i++) {
    const y = 84 + i * 26.83;
    line(s, 1249, y, 1252, y, '#ccc');
    label(s, 1253, y + 2, (1.128 - i * .0005).toFixed(4));
  }
  rect(s, 1250, 386, 24, 9, '#fff');
  label(s, 1253, 393, '1.1223', { fill: '#555' });
  label(s, 1251, 468, '110.25');
  label(s, 1253, 560, '0.00');
  add(s, 'path', { d: 'M720 87h6l-3 3.500z', fill: '#fff' });
  label(s, 729, 91, 'EURUSD,M5\u00a0\u00a01.1224 1.1226 1.1221 1.1223');
  label(s, 721, 99, 'ChannelPatternDetector');
  const note = (y, t) => label(s, 723, y, t, { stroke: '#0b0b0b', 'stroke-width': 2, 'paint-order': 'stroke' });
  note(281, '#102675368 buy 0.50'); note(404, '#102681793 sell 0.50'); note(441, '#102681793 tp');
  label(s, 721, 469, 'Better Volume 1.4 0.0000 0.0000 0.0000 70.0000 0.0000 0.0000 41.0000');
  label(s, 1237, 91, 'Ilan1_6_niz', { 'text-anchor': 'end' });
  face(s, 1242, 89);
  [['Bar:', '00:04'], ['Broker:', '23:59'], ['Tokyo:', '18:17'], ['London:', '08:17'], ['New York:', '03:17'], ['GMT', '09:17']].forEach((r, i) => {
    label(s, 1188, 112 + i * 10, r[0], { class: 'clock', fill: '#dcc650', 'text-anchor': 'end', style: 'fill:#dcc650' });
    label(s, 1197, 112 + i * 10, r[1], { class: 'clock', fill: '#4fd6c4' });
  });
})();
```
